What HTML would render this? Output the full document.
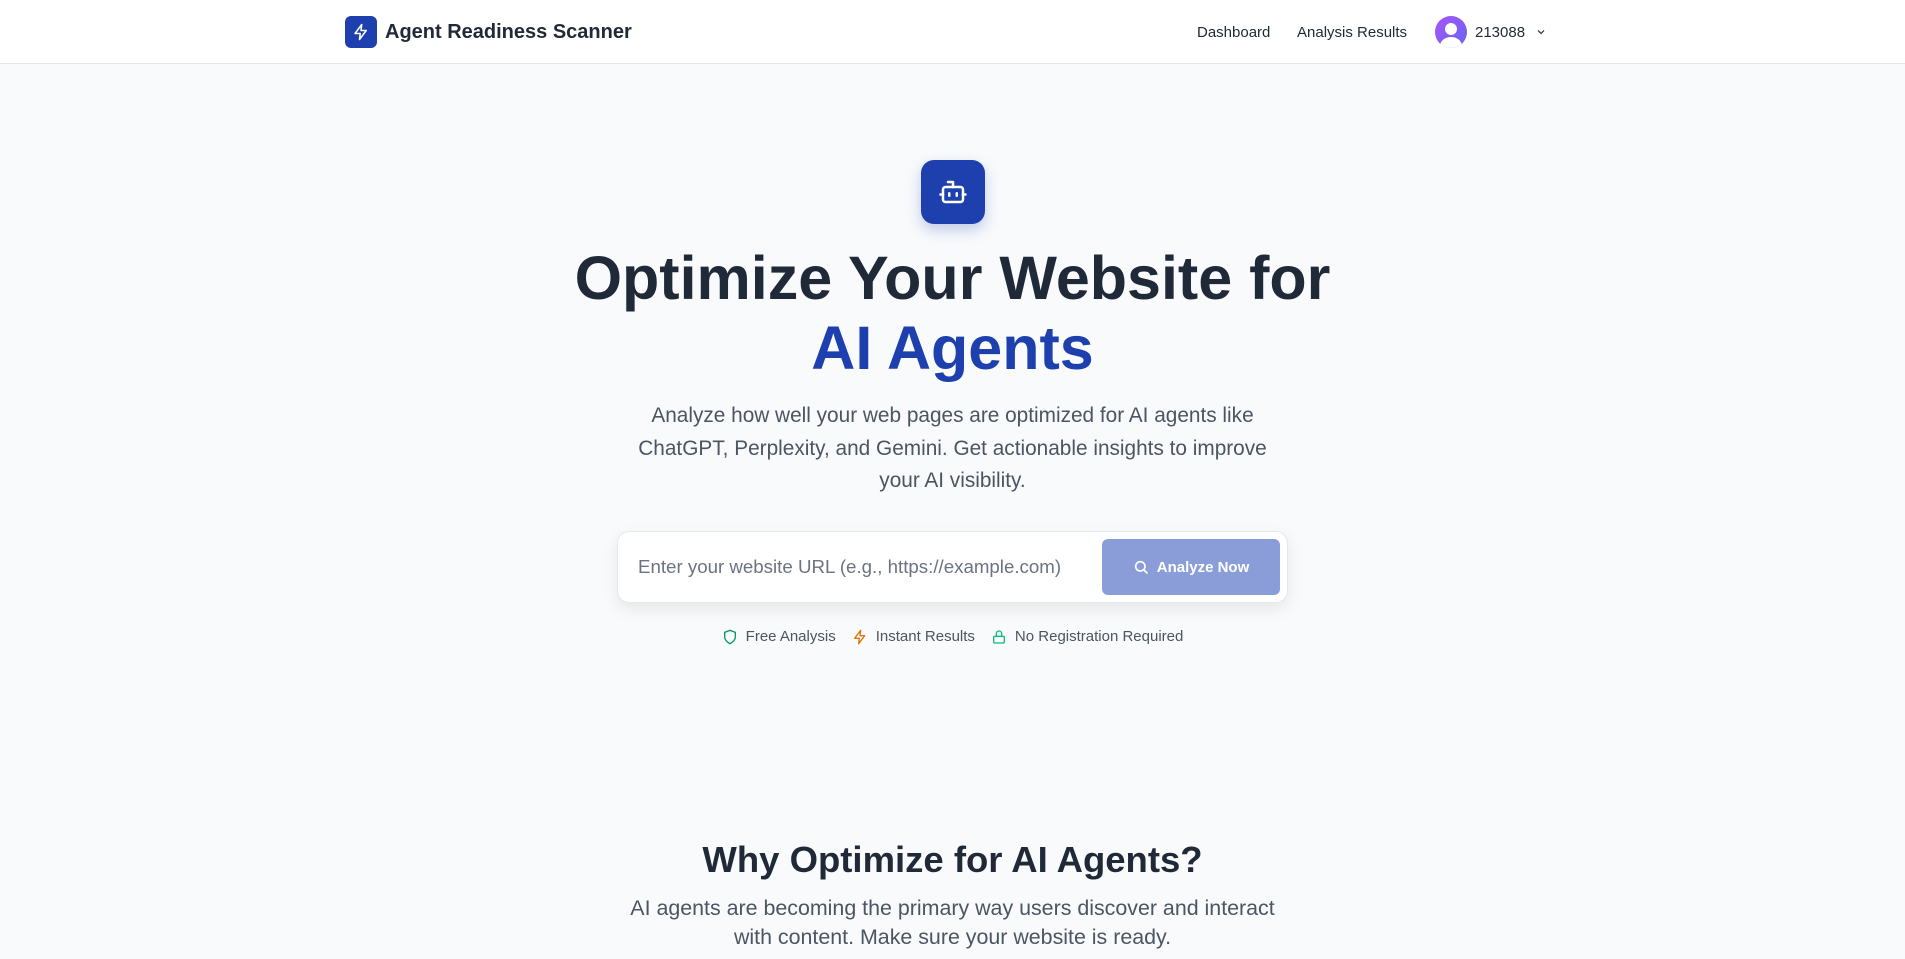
<!DOCTYPE html>
<html><head><meta charset="utf-8"><style>
*{margin:0;padding:0;box-sizing:border-box}
body{width:1905px;height:959px;overflow:hidden;background:#f8fafc;font-family:"Liberation Sans",sans-serif;color:#1f2937}
nav{height:64px;background:#fff;border-bottom:1px solid #e5e7eb;position:relative}
.logo{position:absolute;left:345px;top:16px;width:32px;height:32px;background:#1e40af;border-radius:6px;display:flex;align-items:center;justify-content:center}
.brand{position:absolute;left:385px;top:21px;font-size:20px;font-weight:600;color:#1f2937}
.nl{position:absolute;top:24px;font-size:15px;color:#1f2937}
.av{position:absolute;left:1435px;top:16px;width:32px;height:32px;border-radius:50%;background:linear-gradient(135deg,#a855f7,#6366f1);overflow:hidden}
.robot{position:absolute;left:921px;top:160px;width:64px;height:64px;background:#1e40af;border-radius:13px;box-shadow:0 6px 14px rgba(30,64,175,.25);display:flex;align-items:center;justify-content:center}
h1{position:absolute;left:0;width:1905px;text-align:center;top:243px;font-size:61px;line-height:70px;font-weight:600;color:#1f2937}
h1 span{color:#1e40af}
.p{position:absolute;left:0;width:1905px;text-align:center;top:400px;font-size:20.8px;line-height:32.5px;color:#4b5563}
.box{position:absolute;left:617px;top:531px;width:671px;height:72px;background:#fff;border:1px solid #e5e7eb;border-radius:12px;box-shadow:0 6px 16px rgba(0,0,0,.08)}
.ph{position:absolute;left:20px;top:24px;font-size:18.7px;color:#6b7280}
.btn{position:absolute;left:484px;top:7px;width:178px;height:56px;background:#8b9dd9;border-radius:6px;color:#fff;font-size:15px;font-weight:600;display:flex;align-items:center;justify-content:center;gap:8px}
.f{position:absolute;top:628px;left:0;width:1905px;display:flex;justify-content:center;gap:16px;font-size:15px;color:#4b5563}
.f div{display:flex;align-items:center;gap:8px}
h2{position:absolute;left:0;width:1905px;text-align:center;top:839px;font-size:36.5px;font-weight:600;color:#1f2937}
.p2{position:absolute;left:0;width:1905px;text-align:center;top:894px;font-size:21.4px;line-height:29px;color:#4b5563}
</style></head><body>
<nav>
<div class="logo"><svg width="18" height="18" viewBox="0 0 24 24" fill="none" stroke="#fff" stroke-width="2" stroke-linejoin="round"><path d="M13 2L4 14h7l-1 8 9-12h-7z"/></svg></div>
<div class="brand">Agent Readiness Scanner</div>
<div class="nl" style="left:1197px">Dashboard</div>
<div class="nl" style="left:1297px">Analysis Results</div>
<div class="av"><div style="position:absolute;left:10px;top:7px;width:12px;height:12px;border-radius:50%;background:#fff"></div><div style="position:absolute;left:5px;top:21px;width:22px;height:18px;border-radius:50%;background:#fff"></div></div>
<div class="nl" style="left:1475px">213088</div>
<svg style="position:absolute;left:1535px;top:26px" width="12" height="12" viewBox="0 0 24 24" fill="none" stroke="#374151" stroke-width="2.5"><path d="M6 9l6 6 6-6"/></svg>
</nav>
<div class="robot"><svg width="30" height="30" viewBox="0 0 24 24" fill="none" stroke="#fff" stroke-width="2" stroke-linecap="round" stroke-linejoin="round"><path d="M12 8V4H8"/><rect x="4" y="8" width="16" height="12" rx="2"/><path d="M2 14h2M20 14h2M15 13v2M9 13v2"/></svg></div>
<h1>Optimize Your Website for<br><span>AI Agents</span></h1>
<div class="p">Analyze how well your web pages are optimized for AI agents like<br>ChatGPT, Perplexity, and Gemini. Get actionable insights to improve<br>your AI visibility.</div>
<div class="box"><div class="ph">Enter your website URL (e.g., https://example.com)</div>
<div class="btn"><svg width="16" height="16" viewBox="0 0 24 24" fill="none" stroke="#fff" stroke-width="2.5" stroke-linecap="round"><circle cx="11" cy="11" r="7"/><path d="M21 21l-4.3-4.3"/></svg>Analyze Now</div></div>
<div class="f">
<div><svg width="16" height="16" viewBox="0 0 24 24" fill="none" stroke="#059669" stroke-width="2"><path d="M12 22s8-4 8-10V5l-8-3-8 3v7c0 6 8 10 8 10z"/></svg>Free Analysis</div>
<div><svg width="16" height="16" viewBox="0 0 24 24" fill="none" stroke="#d97706" stroke-width="2" stroke-linejoin="round"><path d="M13 2L4 14h7l-1 8 9-12h-7z"/></svg>Instant Results</div>
<div><svg width="16" height="16" viewBox="0 0 24 24" fill="none" stroke="#10b981" stroke-width="2"><rect x="4" y="11" width="16" height="10" rx="2"/><path d="M8 11V7a4 4 0 0 1 8 0v4"/></svg>No Registration Required</div>
</div>
<h2>Why Optimize for AI Agents?</h2>
<div class="p2">AI agents are becoming the primary way users discover and interact<br>with content. Make sure your website is ready.</div>
</body></html>
